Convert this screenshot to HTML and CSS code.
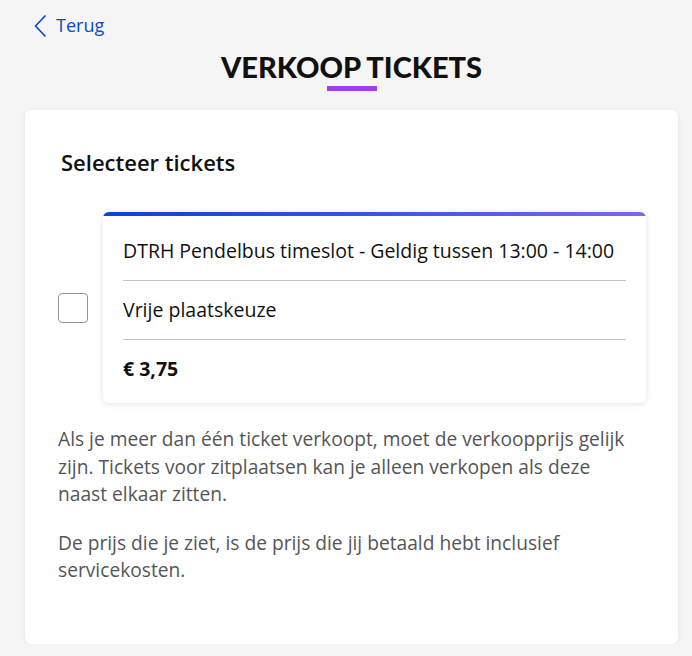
FILE: index.html
```html
<!DOCTYPE html>
<html lang="nl">
<head>
<meta charset="utf-8">
<title>Verkoop tickets</title>
<link rel="stylesheet" href="styles.css">
</head>
<body>
<div class="page">
  <a class="back" href="#">
    <svg class="back-icon" width="12" height="22" viewBox="0 0 12 22" aria-hidden="true"><polyline points="11,1 1.5,11 11,21" fill="none" stroke="currentColor" stroke-width="1.7" stroke-linecap="round" stroke-linejoin="round"/></svg>
    <span>Terug</span>
  </a>
  <h1 class="title">VERKOOP TICKETS</h1>
  <div class="title-bar"></div>
  <section class="card">
    <h2 class="card-heading">Selecteer tickets</h2>
    <div class="ticket-row">
      <label class="checkbox"><input type="checkbox"><span class="box"></span></label>
      <div class="ticket">
        <div class="ticket-accent"></div>
        <div class="ticket-body">
          <div class="ticket-line first">DTRH Pendelbus timeslot - Geldig tussen 13:00 - 14:00</div>
          <div class="ticket-line">Vrije plaatskeuze</div>
          <div class="ticket-line last price">€ 3,75</div>
        </div>
      </div>
    </div>
    <p class="note">Als je meer dan één ticket verkoopt, moet de verkoopprijs gelijk zijn. Tickets voor zitplaatsen kan je alleen verkopen als deze naast elkaar zitten.</p>
    <p class="note second">De prijs die je ziet, is de prijs die jij betaald hebt inclusief servicekosten.</p>
  </section>
</div>
</body>
</html>
```
FILE: styles.css
```css
* { box-sizing: border-box; }
html, body { margin: 0; padding: 0; }
body {
  background: #f5f5f5;
  font-family: "Open Sans", "Noto Sans", sans-serif;
  color: #111;
}
.page {
  padding: 12px 14px 0 25px;
}
.back {
  display: inline-flex;
  align-items: center;
  gap: 10px;
  margin-left: 9px;
  color: #0a47d6;
  text-decoration: none;
  font-size: 18px;
  line-height: 26px;
}
.back-icon { display: block; margin-top: 2px; }
.title {
  margin: 7px 0 0;
  text-align: center;
  font-family: Lato, sans-serif;
  font-size: 29px;
  line-height: 36px;
  font-weight: 900;
  color: #111;
}
.title-bar {
  width: 50px;
  height: 5px;
  margin: 1px auto 0;
  background: #a33bf0;
}
.card {
  margin-top: 19px;
  background: #fff;
  border-radius: 6px;
  box-shadow: 0 1px 4px rgba(0,0,0,0.08);
  padding: 38px 32px 60px 33px;
}
.card-heading {
  margin: 0 0 36px 3px;
  font-size: 22px;
  line-height: 28px;
  font-weight: 600;
  color: #111;
}
.ticket-row {
  display: flex;
  align-items: center;
  gap: 15px;
}
.checkbox { position: relative; display: block; width: 30px; height: 30px; flex: none; }
.checkbox input { position: absolute; opacity: 0; margin: 0; width: 100%; height: 100%; }
.checkbox .box {
  display: block;
  width: 30px;
  height: 30px;
  border: 1px solid #949494;
  border-radius: 4px;
  background: #fff;
}
.ticket {
  flex: 1;
  background: #fff;
  border-radius: 6px;
  overflow: hidden;
  box-shadow: 0 1px 6px rgba(0,0,0,0.12);
}
.ticket-accent {
  height: 4px;
  background: linear-gradient(90deg, #0846d6 0%, #3a56e0 50%, #7c68ec 100%);
}
.ticket-body {
  padding: 0 20px;
}
.ticket-line {
  padding: 17px 0;
  font-size: 19.5px;
  line-height: 24px;
  color: #111;
  border-bottom: 1px solid #c4c4c4;
}
.ticket-line.first { padding-top: 23px; }
.ticket-line.last { border-bottom: none; padding-bottom: 22px; }
.price { font-weight: 700; }
.note {
  margin: 22px 0 0;
  max-width: 584px;
  font-size: 19.2px;
  line-height: 27.5px;
  color: #555;
}
.note.second { margin-top: 21px; }
```
